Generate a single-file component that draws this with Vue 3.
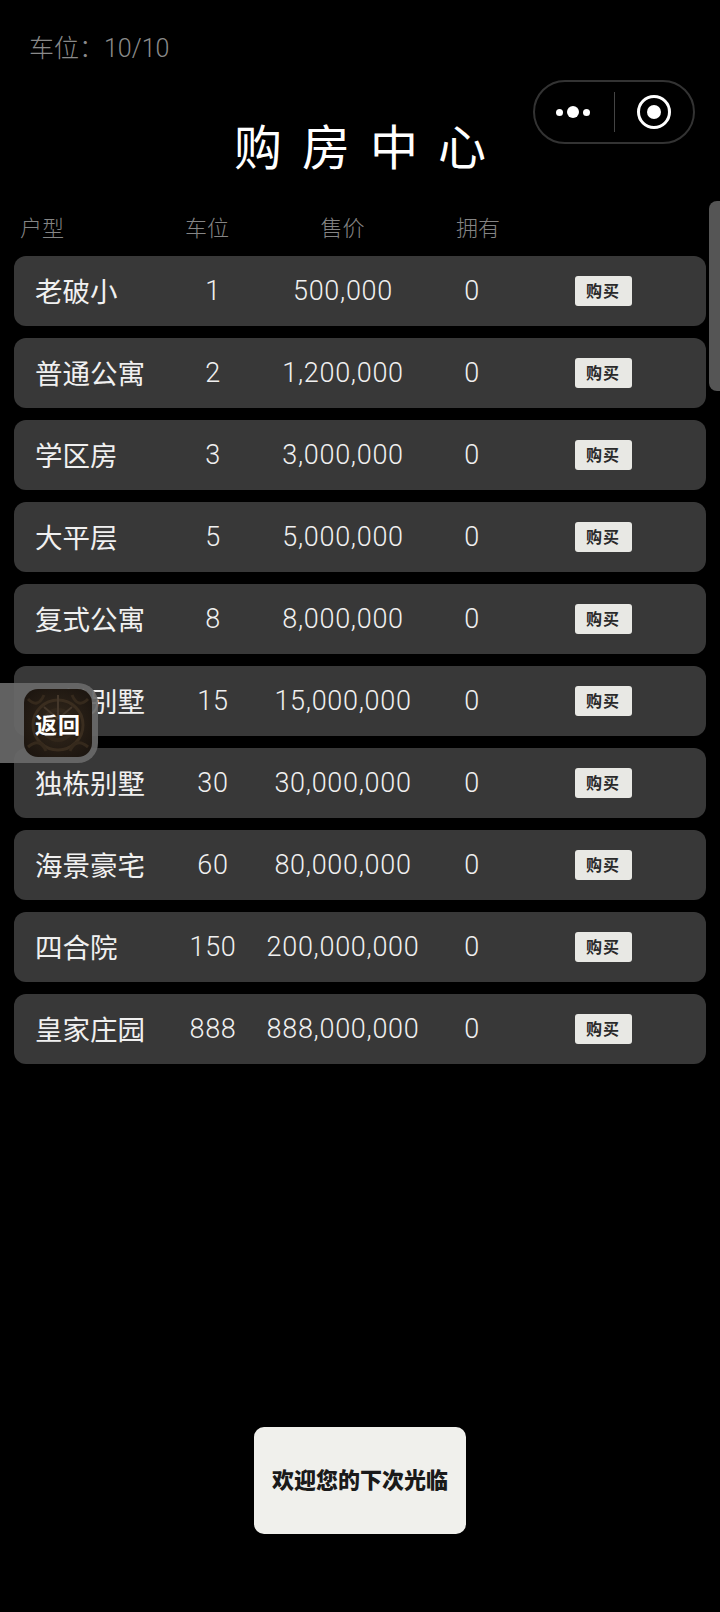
<template>
  <div class="page">
    <div class="parking">车位：10/10</div>
    <div class="title">购房中心</div>

    <div class="table-head">
      <span class="head-name">户型</span>
      <span>车位</span>
      <span>售价</span>
      <span>拥有</span>
    </div>

    <div class="list">
      <div v-for="item in houses" :key="item.name" class="row">
        <span class="name">{{ item.name }}</span>
        <span class="cell">{{ item.slots }}</span>
        <span class="cell">{{ item.price }}</span>
        <span class="cell">0</span>
        <span class="cell"><button class="buy-btn">购买</button></span>
      </div>
    </div>

    <button class="leave-btn">欢迎您的下次光临</button>

    <!-- 小程序胶囊 -->
    <div class="capsule">
      <div class="dots"><i></i><i class="big"></i><i></i></div>
      <div class="divider"></div>
      <div class="target"><i></i></div>
    </div>

    <div class="scrollbar"></div>

    <div class="back-wrap">
      <div class="back-icon">
        <svg class="back-art" viewBox="0 0 68 68" fill="none">
          <circle cx="34" cy="36" r="25" stroke="#3a2d1f" stroke-width="3" />
          <circle cx="34" cy="36" r="15" stroke="#32271b" stroke-width="4" />
          <path d="M34 6 L34 30 M20 18 L34 30 L48 18" stroke="#44372a" stroke-width="2" />
          <path d="M4 58 Q16 48 22 62 M64 58 Q52 48 46 62 M4 10 Q14 20 20 6 M64 10 Q54 20 48 6" stroke="#35291c" stroke-width="3" />
        </svg>
        <span class="back-text">返回</span>
      </div>
    </div>
  </div>
</template>

<script setup>
const houses = [
  { name: '老破小', slots: 1, price: '500,000' },
  { name: '普通公寓', slots: 2, price: '1,200,000' },
  { name: '学区房', slots: 3, price: '3,000,000' },
  { name: '大平层', slots: 5, price: '5,000,000' },
  { name: '复式公寓', slots: 8, price: '8,000,000' },
  { name: '联排别墅', slots: 15, price: '15,000,000' },
  { name: '独栋别墅', slots: 30, price: '30,000,000' },
  { name: '海景豪宅', slots: 60, price: '80,000,000' },
  { name: '四合院', slots: 150, price: '200,000,000' },
  { name: '皇家庄园', slots: 888, price: '888,000,000' }
]
</script>

<style>
html, body { background: #000; }
</style>

<style scoped>
.page {
  position: relative;
  width: 720px;
  height: 1612px;
  overflow: hidden;
  background: #000;
  color: #f0f0f0;
  font-family: Roboto, "Noto Sans CJK SC", "Noto Sans", sans-serif;
  font-weight: 400;
  display: flex;
  flex-direction: column;
}
.parking {
  margin: 30px 0 0 29px;
  font-size: 25px;
  font-weight: 300;
  line-height: 38px;
  color: #8a8a8a;
}
.title {
  margin-top: 46px;
  height: 70px;
  line-height: 70px;
  text-align: center;
  font-size: 48px;
  letter-spacing: 20px;
  padding-left: 20px;
  color: #fff;
}
.table-head {
  margin-top: 27px;
  height: 36px;
  line-height: 36px;
  padding-left: 20px;
  display: grid;
  grid-template-columns: 144px 86px 185px 86px;
  font-size: 22px;
  font-weight: 300;
  color: #858585;
  text-align: center;
}
.head-name { text-align: left; }
.list {
  margin: 9px 0 0 14px;
  width: 692px;
  display: flex;
  flex-direction: column;
  gap: 12px;
}
.row {
  height: 70px;
  padding: 0 13px 0 21px;
  box-sizing: border-box;
  display: grid;
  grid-template-columns: 136px 84px 176px 82px 180px;
  align-items: center;
  background: #383838;
  border-radius: 12px;
  font-size: 27.5px;
}
.name { margin-top: -3px; }
.cell {
  text-align: center;
  font-size: 27px;
  font-weight: 300;
  letter-spacing: 0.7px;
  display: flex;
  justify-content: center;
  align-items: center;
}
.buy-btn {
  width: 57px;
  height: 30px;
  padding: 0 0 2px;
  border: none;
  border-radius: 3px;
  background: #e8e8e4;
  color: #2a2a2a;
  font-family: "Noto Sans CJK SC", sans-serif;
  font-size: 16px;
  font-weight: 700;
  letter-spacing: 1px;
}
.leave-btn {
  position: absolute; /* 底部悬浮按钮 */
  left: 254px;
  top: 1427px;
  width: 212px;
  height: 107px;
  padding: 0 0 6px;
  border: none;
  border-radius: 10px;
  background: #f0f0ec;
  color: #1a1a1a;
  font-family: "Noto Sans CJK SC", sans-serif;
  font-size: 22px;
  font-weight: 900;
  white-space: nowrap;
}
.capsule {
  position: absolute;
  left: 533px;
  top: 80px;
  width: 162px;
  height: 64px;
  box-sizing: border-box;
  border: 2px solid #333;
  border-radius: 32px;
}
.dots {
  position: absolute;
  left: 21px;
  top: 20px;
  height: 20px;
  display: flex;
  align-items: center;
  gap: 4px;
}
.dots i {
  width: 7px;
  height: 7px;
  border-radius: 50%;
  background: #fff;
}
.dots i.big { width: 12px; height: 12px; }
.divider {
  position: absolute;
  left: 79px;
  top: 10px;
  width: 1px;
  height: 40px;
  background: #444;
}
.target {
  position: absolute;
  left: 102px;
  top: 13px;
  width: 34px;
  height: 34px;
  box-sizing: border-box;
  border: 3px solid #fff;
  border-radius: 50%;
  display: flex;
  align-items: center;
  justify-content: center;
}
.target i {
  width: 14px;
  height: 14px;
  border-radius: 50%;
  background: #fff;
}
.scrollbar {
  position: absolute;
  right: 0;
  top: 201px;
  width: 11px;
  height: 190px;
  border-radius: 8px 0 0 8px;
  background: #555;
}
.back-wrap {
  position: absolute;
  left: 0;
  top: 683px;
  width: 98px;
  height: 80px;
  border-radius: 0 20px 20px 0;
  background: rgba(105, 105, 105, 0.92);
}
.back-icon {
  position: absolute;
  left: 24px;
  top: 6px;
  width: 68px;
  height: 68px;
  border-radius: 14px;
  overflow: hidden;
  background: radial-gradient(circle at 50% 50%, #33281c, #1d1610 85%);
  display: flex;
  align-items: center;
  justify-content: center;
}
.back-art {
  position: absolute;
  left: 0;
  top: 0;
  width: 68px;
  height: 68px;
}
.back-text {
  position: relative;
  color: #fff;
  font-family: "Noto Sans CJK SC", sans-serif;
  font-size: 22px;
  font-weight: 700;
  letter-spacing: 1px;
}
</style>
